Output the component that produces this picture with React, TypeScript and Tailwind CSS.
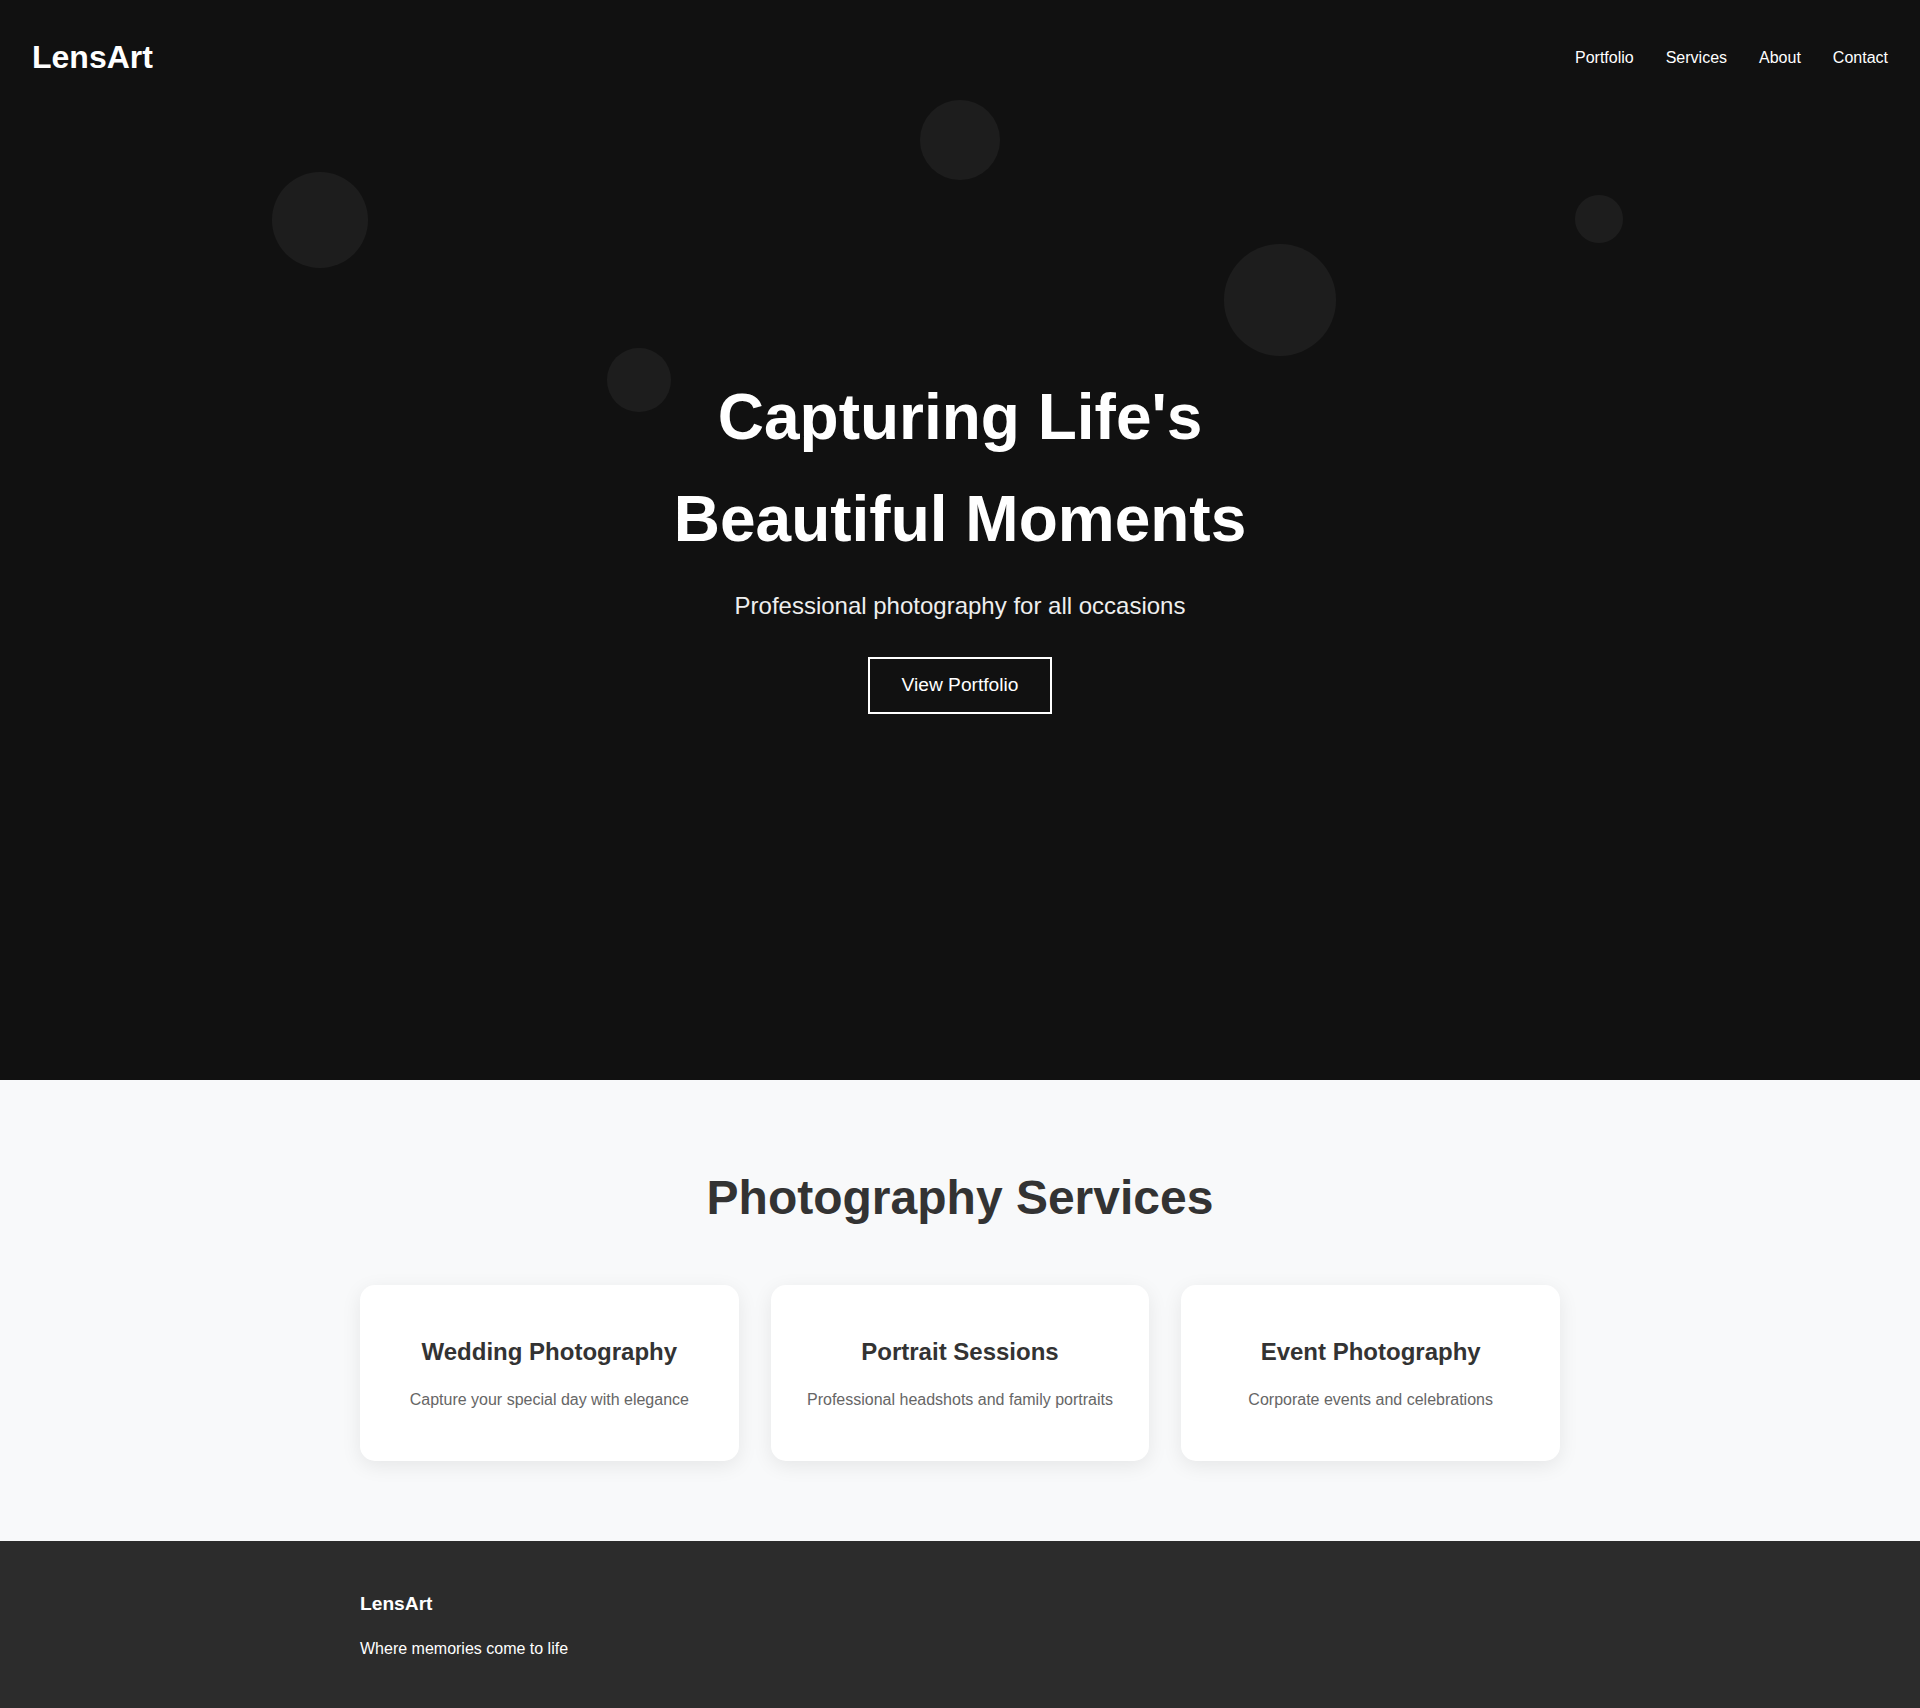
import React from 'react'

const navLinks = ['Portfolio', 'Services', 'About', 'Contact']

const services = [
    { title: 'Wedding Photography', text: 'Capture your special day with elegance' },
    { title: 'Portrait Sessions', text: 'Professional headshots and family portraits' },
    { title: 'Event Photography', text: 'Corporate events and celebrations' },
]

// decorative bubbles in the hero
const bubbles = [
    { left: 272, top: 172, size: 96 },
    { left: 920, top: 100, size: 80 },
    { left: 1575, top: 195, size: 48 },
    { left: 1224, top: 244, size: 112 },
    { left: 607, top: 348, size: 64 },
]

export default function App() {
    return (
        <div className="font-['Liberation_Sans',Arial,sans-serif] leading-[1.6] text-[#333]">
            {/*hero*/}
            <section className="relative h-[1080px] bg-[#111111] overflow-hidden flex items-center justify-center">
                {bubbles.map((b, i) => (
                    <div
                        key={i}
                        className="absolute rounded-full bg-white/5"
                        style={{ left: b.left, top: b.top, width: b.size, height: b.size }}
                    />
                ))}
                <nav className="absolute top-0 inset-x-0 flex items-center justify-between px-8 py-8 z-10">
                    <div className="text-[32px] leading-[1.6] font-bold text-white">LensArt</div>
                    <ul className="flex gap-8">
                        {navLinks.map((l) => (
                            <li key={l}>
                                <a href="#" className="text-base leading-[1.6] text-white">
                                    {l}
                                </a>
                            </li>
                        ))}
                    </ul>
                </nav>
                <div className="relative flex flex-col items-center text-center">
                    <h1 className="text-[64px] font-bold text-white leading-[1.6] max-w-[700px]">
                        Capturing Life's Beautiful Moments
                    </h1>
                    <p className="mt-4 text-2xl leading-[1.6] text-[#eeeeee]">
                        Professional photography for all occasions
                    </p>
                    <a
                        href="#"
                        className="mt-8 border-2 border-white px-8 py-[11px] text-[19.2px] leading-[1.6] text-white"
                    >
                        View Portfolio
                    </a>
                </div>
            </section>

            {/*services*/}
            <section className="bg-[#f8f9fa] py-20">
                <div className="max-w-[1200px] mx-auto">
                    <h2 className="text-center text-5xl leading-[1.6] font-bold text-[#333]">
                        Photography Services
                    </h2>
                    <div className="mt-12 grid grid-cols-3 gap-8">
                        {services.map((s) => (
                            <div
                                key={s.title}
                                className="bg-white rounded-[15px] px-8 py-12 text-center shadow-[0_5px_20px_rgba(0,0,0,0.08)]"
                            >
                                <h3 className="text-2xl leading-[1.6] font-bold text-[#333] mb-4">
                                    {s.title}
                                </h3>
                                <p className="text-base leading-[1.6] text-[#666]">{s.text}</p>
                            </div>
                        ))}
                    </div>
                </div>
            </section>

            {/*footer*/}
            <footer className="bg-[#2c2c2c] py-12 text-white">
                <div className="max-w-[1200px] mx-auto">
                    <h3 className="text-[19.2px] leading-[1.6] font-bold mb-4">LensArt</h3>
                    <p className="text-base leading-[1.6]">Where memories come to life</p>
                </div>
            </footer>
        </div>
    )
}
